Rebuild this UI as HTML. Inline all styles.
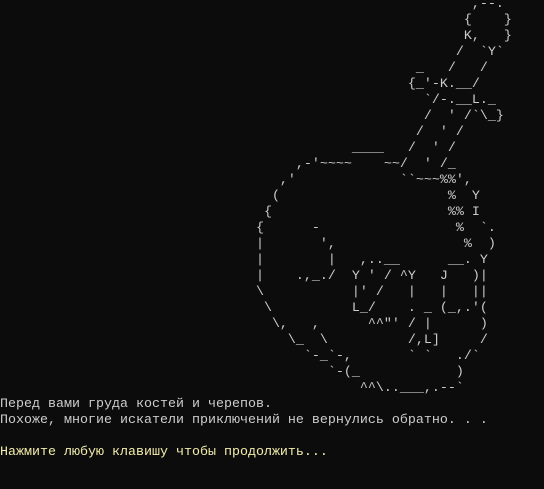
<!DOCTYPE html>
<html><head><meta charset="utf-8">
<style>
html,body{margin:0;padding:0;background:#0c0c0c;width:544px;height:489px;overflow:hidden}
pre{position:absolute;left:0;top:-3px;margin:0;font-family:"Liberation Mono","DejaVu Sans Mono",monospace;font-size:13.33px;line-height:16px;color:#cccccc;white-space:pre}
.y{color:#f3eeaa}
</style></head><body>
<pre>                                                           ,--.
                                                          {    }
                                                          K,   }
                                                         /  `Y`
                                                    _   /   /
                                                   {_'-K.__/
                                                     `/-.__L._
                                                     /  ' /`\_}
                                                    /  ' /
                                            ____   /  ' /
                                     ,-'~~~~    ~~/  ' /_
                                   ,'             ``~~~%%',
                                  (                     %  Y
                                 {                      %% I
                                {      -                 %  `.
                                |       ',                %  )
                                |        |   ,..__      __. Y
                                |    .,_./  Y ' / ^Y   J   )|
                                \           |' /   |   |   ||
                                 \          L_/    . _ (_,.'(
                                  \,   ,      ^^"' / |      )
                                    \_  \          /,L]     /
                                      `-_`-,       ` `   ./`
                                         `-(_            )
                                             ^^\..___,.--`
Перед вами груда костей и черепов.
Похоже, многие искатели приключений не вернулись обратно. . .

<span class="y">Нажмите любую клавишу чтобы продолжить...</span></pre>
</body></html>
